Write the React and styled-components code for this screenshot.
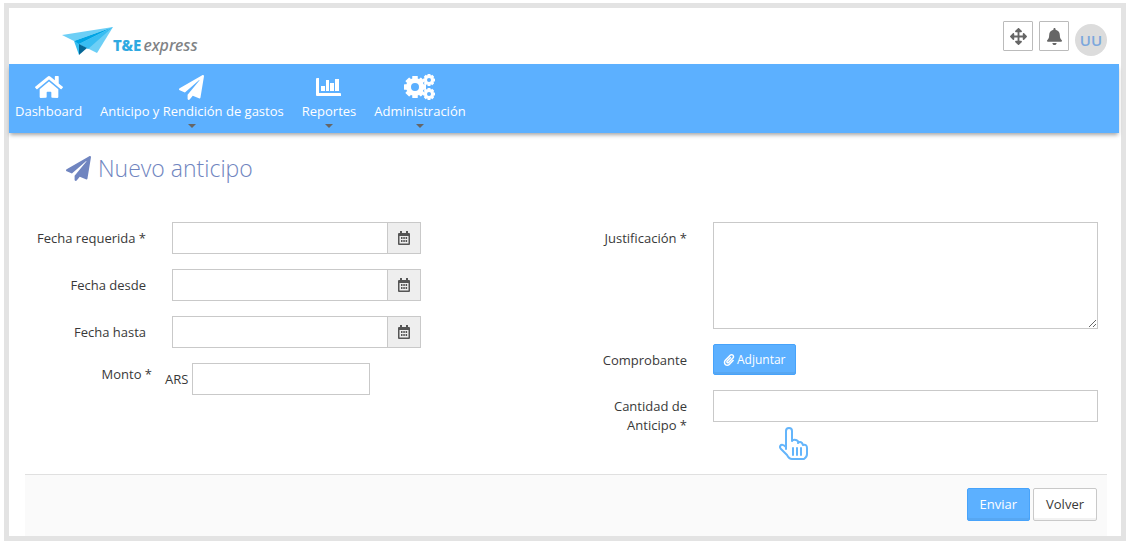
import React from 'react';
import styled, { createGlobalStyle } from 'styled-components';
import { FaHome, FaPaperPlane, FaBell, FaArrowsAlt, FaPaperclip } from 'react-icons/fa';

const GlobalStyle = createGlobalStyle`
  *, *::before, *::after { box-sizing: border-box; }
  body {
    margin: 0;
    background: #fff;
    color: #393939;
    font: 13px/19px 'Open Sans', 'Noto Sans', sans-serif;
  }
  button, input, textarea { font: inherit; color: inherit; }
`;

const Frame = styled.div`
  margin: 3px 4px 0;
  border: 5px solid #e3e3e3;
`;

const Header = styled.header`
  display: flex;
  justify-content: space-between;
  align-items: flex-start;
  height: 56px;
  padding: 13px 14px 0 53px;
`;

const Logo = styled.a`
  display: flex;
  align-items: flex-start;
  padding-top: 6px;
  color: #808285;
  text-decoration: none;
`;

const LogoText = styled.span`
  padding-top: 8px;
  font-size: 16px;
  font-style: italic;
  font-weight: 500;
  line-height: 20px;
  font-family: 'Noto Sans', 'Open Sans', sans-serif;

  b {
    margin-right: 2px;
    color: #2fa9e1;
    font-size: 15px;
    font-style: normal;
    font-weight: 800;
  }
`;

const Tools = styled.div`
  display: flex;
  gap: 6px;
`;

const ToolButton = styled.button`
  display: grid;
  place-items: center;
  width: 30px;
  height: 30px;
  padding: 0;
  border: 1px solid #bbb;
  border-radius: 1px;
  background: #fff;
  color: #666;
  font-size: 17px;
`;

const Avatar = styled.div`
  width: 32px;
  height: 32px;
  margin-top: 3px;
  border-radius: 50%;
  background: #dcdcdc;
  color: #7ba7dc;
  font-size: 15px;
  font-weight: 600;
  line-height: 32px;
  text-align: center;
`;

const Nav = styled.nav`
  display: flex;
  gap: 18px;
  height: 69px;
  margin-right: 2px;
  padding: 10px 6px 0;
  background: #5cb0ff;
  box-shadow: 0 3px 4px -1px rgba(0, 0, 0, 0.35);
`;

const NavItem = styled.a`
  display: flex;
  flex-direction: column;
  align-items: center;
  color: #fff;
  text-decoration: none;
`;

const NavIcon = styled.span`
  display: flex;
  align-items: center;
  height: 26px;
  margin-bottom: 2px;
  font-size: ${({ $size }) => $size}px;
`;

const Caret = styled.span`
  margin-top: 3px;
  border: 4px solid transparent;
  border-top-color: #666;
  border-bottom: 0;
`;

const Title = styled.h1`
  display: flex;
  align-items: center;
  gap: 7px;
  margin: 19px 0 38px 57px;
  color: #7085c0;
  font-size: 23px;
  font-weight: 300;
  line-height: 32px;

  svg { font-size: 25px; }
`;

const Form = styled.form`
  margin: 0 14px 0 16px;
`;

const Columns = styled.div`
  display: grid;
  grid-template-columns: 1fr 1fr;
  padding-bottom: 39px;
`;

const Column = styled.div`
  display: flex;
  flex-direction: column;
  gap: 15px;
  padding-right: 9px;
`;

const Field = styled.div`
  position: relative;
  display: grid;
  grid-template-columns: 121px 1fr;
  column-gap: 26px;
  align-items: start;
`;

const AmountField = styled(Field)`
  grid-template-columns: 127px 1fr;
  column-gap: 13px;
`;

const Label = styled.label`
  padding: ${({ $raised }) => ($raised ? 2 : 7)}px 0 0 12px;
  text-align: right;
`;

const TextInput = styled.input`
  width: 100%;
  min-width: 0;
  height: 32px;
  padding: 5px 6px;
  border: 1px solid #c9c9c9;
  border-radius: 0;
  background: #fff;
`;

const TextArea = styled.textarea`
  display: block;
  width: 100%;
  height: 107px;
  padding: 5px 6px;
  border: 1px solid #c9c9c9;
  border-radius: 0;
  resize: vertical;
`;

const DateGroup = styled.div`
  display: flex;
  width: 249px;
`;

const DateButton = styled.button`
  display: grid;
  flex: none;
  place-items: center;
  width: 34px;
  height: 32px;
  padding: 0;
  margin-left: -1px;
  border: 1px solid #c9c9c9;
  background: #eee;
  color: #555;
`;

const Amount = styled.div`
  display: flex;
  align-items: center;
  gap: 4px;
  width: 205px;
`;

const Button = styled.button`
  display: inline-flex;
  align-items: center;
  justify-content: center;
  gap: 2px;
  height: ${({ $small }) => ($small ? 31 : 33)}px;
  padding: 0 ${({ $small }) => ($small ? 9 : 12)}px;
  border: 1px solid ${({ $primary }) => ($primary ? '#47a3fb' : '#c9c9c9')};
  border-radius: 2px;
  background: ${({ $primary }) => ($primary ? '#5cb0ff' : '#fff')};
  box-shadow: inset 0 -2px 0 rgba(0, 0, 0, 0.05);
  color: ${({ $primary }) => ($primary ? '#fff' : '#393939')};
  font-size: ${({ $small }) => ($small ? 12 : 13)}px;
  justify-self: start;
`;

const Pointer = styled.svg`
  position: absolute;
  top: 37px;
  left: 213px;
`;

const Actions = styled.div`
  display: flex;
  justify-content: flex-end;
  gap: 3px;
  padding: 13px 10px 15px;
  border-top: 1px solid #e0e0e0;
  background: #fafafa;
`;

function PlaneLogo() {
  return (
    <svg width="51" height="29" viewBox="0 0 51 29" aria-hidden="true">
      <path d="M0 8 51 0 12 14Z" fill="#6dcff6" />
      <path d="M12 14 51 0 17 18Z" fill="#00a4e4" />
      <path d="M12 14 17 17 17 28Z" fill="#35bdf0" />
      <path d="M51 0 17 17 35 26Z" fill="#6dcff6" />
      <path d="M51 0 17 17 26 22Z" fill="#38bdf2" />
      <path d="M17 17 25 21 17 28Z" fill="#056796" />
    </svg>
  );
}

function BarsIcon() {
  return (
    <svg width="25" height="18" viewBox="0 0 25 18" fill="currentColor" aria-hidden="true">
      <path d="M0 1q0-1 1-1h2v15h21q1 0 1 1v2H1q-1 0-1-1ZM5 8h4v5H5ZM10 2h3v11h-3ZM14 5h4v8h-4ZM19 1h4v12h-4Z" />
    </svg>
  );
}

function Gear({ x, y, r, hole, teeth, tooth }) {
  const body = r - tooth;
  const step = 360 / teeth;
  const width = r * 0.5;
  return (
    <g transform={`translate(${x} ${y})`}>
      <circle r={(body + hole) / 2} fill="none" stroke="currentColor" strokeWidth={body - hole} />
      {Array.from({ length: teeth }, (_, i) => (
        <rect
          key={i}
          x={-width / 2}
          y={-r}
          width={width}
          height={tooth + 1}
          rx="0.5"
          fill="currentColor"
          transform={`rotate(${i * step})`}
        />
      ))}
    </g>
  );
}

function GearsIcon() {
  return (
    <svg width="31" height="26" viewBox="0 0 31 26" aria-hidden="true">
      <Gear x={11} y={13} r={11} hole={4} teeth={8} tooth={2} />
      <Gear x={25} y={6} r={6} hole={2} teeth={8} tooth={1} />
      <Gear x={25} y={20} r={6} hole={2} teeth={8} tooth={1} />
    </svg>
  );
}

function CalendarIcon() {
  return (
    <svg width="12" height="14" viewBox="0 0 12 14" fill="currentColor" aria-hidden="true">
      <path
        fillRule="evenodd"
        d="M2 0h2v2h4V0h2v2h1q1 0 1 1v10q0 1-1 1H1q-1 0-1-1V3q0-1 1-1h1ZM1.500 5v7.500h9V5Z"
      />
      <path d="M3 6h1.500v2H3ZM5.300 6h1.500v2H5.300ZM7.600 6h1.500v2H7.600ZM3 9h1.500v2H3ZM5.300 9h1.500v2H5.300ZM7.600 9h1.500v2H7.600Z" />
    </svg>
  );
}

function DateField({ id, label }) {
  return (
    <Field>
      <Label htmlFor={id}>{label}</Label>
      <DateGroup>
        <TextInput id={id} type="text" />
        <DateButton type="button" aria-label={`Calendario: ${label}`}>
          <CalendarIcon />
        </DateButton>
      </DateGroup>
    </Field>
  );
}

const menu = [
  { label: 'Dashboard', icon: <FaHome />, size: 28 },
  { label: 'Anticipo y Rendición de gastos', icon: <FaPaperPlane />, size: 25, sub: true },
  { label: 'Reportes', icon: <BarsIcon />, size: 25, sub: true },
  { label: 'Administración', icon: <GearsIcon />, size: 25, sub: true },
];

export default function App() {
  return (
    <>
      <GlobalStyle />
      <Frame>
        <Header>
          <Logo href="#">
            <PlaneLogo />
            <LogoText>
              <b>T&amp;E</b>express
            </LogoText>
          </Logo>
          <Tools>
            <ToolButton aria-label="Expandir">
              <FaArrowsAlt />
            </ToolButton>
            <ToolButton aria-label="Notificaciones">
              <FaBell />
            </ToolButton>
            <Avatar>UU</Avatar>
          </Tools>
        </Header>
        <Nav>
          {menu.map(({ label, icon, size, sub }) => (
            <NavItem href="#" key={label}>
              <NavIcon $size={size}>{icon}</NavIcon>
              {label}
              {sub && <Caret />}
            </NavItem>
          ))}
        </Nav>
        <main>
          <Title>
            <FaPaperPlane />
            Nuevo anticipo
          </Title>
          <Form onSubmit={(e) => e.preventDefault()}>
            <Columns>
              <Column>
                <DateField id="requerida" label="Fecha requerida *" />
                <DateField id="desde" label="Fecha desde" />
                <DateField id="hasta" label="Fecha hasta" />
                <AmountField>
                  <Label htmlFor="monto" $raised>Monto *</Label>
                  <Amount>
                    ARS
                    <TextInput id="monto" type="text" />
                  </Amount>
                </AmountField>
              </Column>
              <Column>
                <Field>
                  <Label htmlFor="justificacion">Justificación *</Label>
                  <TextArea id="justificacion" />
                </Field>
                <Field>
                  <Label htmlFor="comprobante">Comprobante</Label>
                  <Button id="comprobante" type="button" $primary $small>
                    <FaPaperclip />
                    Adjuntar
                  </Button>
                </Field>
                <Field>
                  <Label htmlFor="cantidad">Cantidad de Anticipo *</Label>
                  <TextInput id="cantidad" type="text" />
                  <Pointer width="30" height="34" viewBox="0 0 30 34" fill="none" stroke="#64b5fb" strokeWidth="2" strokeLinejoin="round" strokeLinecap="round" aria-hidden="true">
                    <path d="M7 22V4Q7 1 10 1T13 4V14Q14 12 17 13T19 16Q21 14 23 16L24 18Q28 17 28 21V27Q28 30 25 32H13Q10 32 8 28L2 22Q0 20 2 18Q4 17 7 20" />
                    <path d="M14 21v7M18 21v7M22 21v7" />
                  </Pointer>
                </Field>
              </Column>
            </Columns>
            <Actions>
              <Button type="submit" $primary>Enviar</Button>
              <Button type="button">Volver</Button>
            </Actions>
          </Form>
        </main>
      </Frame>
    </>
  );
}
